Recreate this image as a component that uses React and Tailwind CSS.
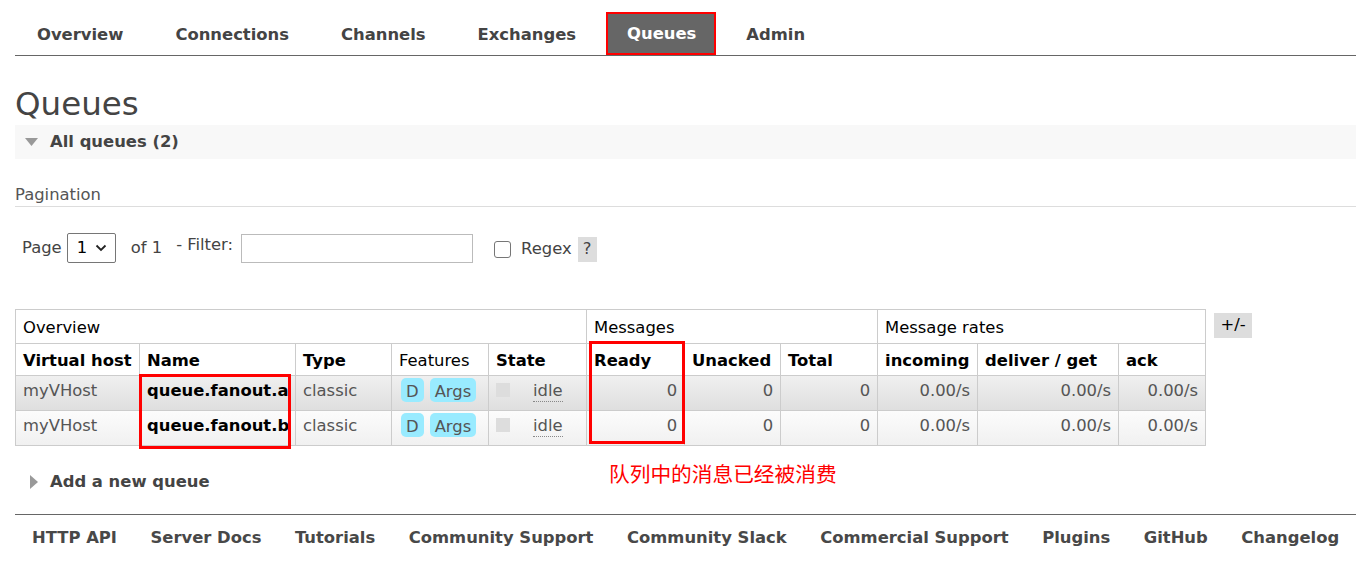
import React from "react";

const NAV = ["Overview", "Connections", "Channels", "Exchanges", "Queues", "Admin"];
const FOOTER = [
  "HTTP API",
  "Server Docs",
  "Tutorials",
  "Community Support",
  "Community Slack",
  "Commercial Support",
  "Plugins",
  "GitHub",
  "Changelog",
];

const QUEUES = [
  { vhost: "myVHost", name: "queue.fanout.a", alt: true },
  { vhost: "myVHost", name: "queue.fanout.b", alt: false },
];

const font = { fontFamily: '"DejaVu Sans", Verdana, sans-serif' };

function Badge({ children }) {
  return (
    <span className="inline-block h-[24px] rounded-[5px] bg-[#99ebff] px-[5px] pt-[3px] leading-[21px] text-[#555]">
      {children}
    </span>
  );
}

function QueueRow({ q }) {
  const bg = q.alt
    ? "bg-gradient-to-b from-[#f0f0f0] to-[#dedede]"
    : "bg-gradient-to-b from-[#fcfcfc] to-[#f0f0f0]";
  const base = "border border-[#ccc] px-[7px] align-top";
  const td = `${base} pt-[3px]`;
  return (
    <tr className={`${bg} h-[35px] text-[#555]`}>
      <td className={td}>{q.vhost}</td>
      <td className={`${td} font-bold text-black`}>{q.name}</td>
      <td className={td}>classic</td>
      <td className={`${base} pt-[2px]`}>
        <div className="flex gap-[6px] pl-[2px]">
          <Badge>D</Badge>
          <Badge>Args</Badge>
        </div>
      </td>
      <td className={`${base} pt-[5px]`}>
        <div className="flex items-start">
          <span className="mt-[2px] inline-block h-[14px] w-[14px] bg-[#ddd]" />
          <span className="ml-[23px] border-b border-dotted border-[#888] leading-[20px]">idle</span>
        </div>
      </td>
      <td className={`${td} text-right`}>0</td>
      <td className={`${td} text-right`}>0</td>
      <td className={`${td} text-right`}>0</td>
      <td className={`${td} text-right`}>0.00/s</td>
      <td className={`${td} text-right`}>0.00/s</td>
      <td className={`${td} text-right`}>0.00/s</td>
    </tr>
  );
}

export default function App() {
  const th = "border border-[#ccc] px-[7px] pt-[3px] text-left font-bold text-black";
  const group = "border border-[#ccc] px-[7px] pt-[3px] text-left font-normal";
  return (
    <div className="min-h-[561px] bg-white pl-[15px] text-[16.4px] text-[#444]" style={font}>
      {/* top navigation */}
      <ul className="flex gap-[8px] border-b border-[#666] pt-[12px]">
        {NAV.map((item) =>
          item === "Queues" ? (
            <li
              key={item}
              className="flex h-[43px] items-center border-2 border-[#f00] bg-[#666] pl-[19px] pr-[18px] pt-[2px] font-bold text-white"
            >
              {item}
            </li>
          ) : (
            <li key={item} className="flex h-[43px] items-center px-[22px] pt-[3px] font-bold text-[#444]">
              {item}
            </li>
          )
        )}
      </ul>

      <h1 className="mt-[30px] mb-[3px] text-[32.5px] leading-[36px] text-[#444]">Queues</h1>

      <div className="flex h-[34px] items-center bg-[#f8f8f8] pl-[10px]">
        <svg width="13" height="8" viewBox="0 0 13 8">
          <path d="M0 0 L13 0 L6.5 8 Z" fill="#999" />
        </svg>
        <span className="ml-[12px] font-bold text-[#444]">All queues (2)</span>
      </div>

      <div className="mt-[26px] border-b border-[#ddd] pb-[1px] leading-[20px] text-[#555]">Pagination</div>

      {/* pagination controls */}
      <div className="mt-[26px] flex h-[30px] items-center pl-[7px] text-[#444]">
        <span className="mt-[1px]">Page</span>
        <div className="ml-[5px] flex h-[30px] w-[49px] items-center rounded-[2px] border border-[#767676] pl-[9px] text-black">
          <span>1</span>
          <svg className="ml-[8px]" width="12" height="8" viewBox="0 0 12 8">
            <path d="M1.5 1.5 L6 6 L10.5 1.5" stroke="#222" strokeWidth="1.8" fill="none" />
          </svg>
        </div>
        <span className="ml-[15px] mt-[1px]">of 1</span>
        <span className="ml-[14px] -mt-[5px]">- Filter:</span>
        <div className="ml-[8px] h-[29px] w-[232px] border border-[#bbb] bg-white" />
        <span className="ml-[21px] mt-[3px] inline-block h-[17px] w-[17px] rounded-[3px] border border-[#767676]" />
        <span className="ml-[10px] mt-[3px]">Regex</span>
        <span className="ml-[6px] mt-[3px] flex h-[25px] w-[19px] items-center justify-center bg-[#ddd] text-[#444]">?</span>
      </div>

      {/* queue table */}
      <div className="relative mt-[46px] flex items-start">
        <table className="w-[1190px] table-fixed border-collapse whitespace-nowrap border border-[#ccc]">
          <colgroup>
            <col className="w-[124px]" />
            <col className="w-[156px]" />
            <col className="w-[96px]" />
            <col className="w-[97px]" />
            <col className="w-[98px]" />
            <col className="w-[98px]" />
            <col className="w-[96px]" />
            <col className="w-[97px]" />
            <col className="w-[100px]" />
            <col className="w-[141px]" />
            <col className="w-[87px]" />
          </colgroup>
          <thead>
            <tr className="h-[34px] text-black">
              <th colSpan={5} className={group}>Overview</th>
              <th colSpan={3} className={group}>Messages</th>
              <th colSpan={3} className={group}>Message rates</th>
            </tr>
            <tr className="h-[32px]">
              <th className={th}>Virtual host</th>
              <th className={th}>Name</th>
              <th className={th}>Type</th>
              <th className="border border-[#ccc] px-[7px] pt-[3px] text-left font-normal text-black">Features</th>
              <th className={th}>State</th>
              <th className={th}>Ready</th>
              <th className={th}>Unacked</th>
              <th className={th}>Total</th>
              <th className={th}>incoming</th>
              <th className={th}>deliver / get</th>
              <th className={th}>ack</th>
            </tr>
          </thead>
          <tbody>
            {QUEUES.map((q) => (
              <QueueRow key={q.name} q={q} />
            ))}
          </tbody>
        </table>

        <span className="ml-[8px] mt-[4px] flex h-[25px] w-[38px] items-center justify-center bg-[#ddd] text-black">
          +/-
        </span>

        {/* annotation overlays */}
        <div className="absolute left-[124px] top-[65px] h-[75px] w-[152px] border-[3px] border-[#f00]" />
        <div className="absolute left-[574px] top-[32px] h-[103px] w-[96px] border-[3px] border-[#f00]" />
        <div
          className="absolute left-[594px] top-[150px] text-[20.7px] leading-[28px] text-[#f00]"
          style={{ fontFamily: '"Noto Sans CJK SC", "DejaVu Sans", sans-serif' }}
        >
          队列中的消息已经被消费
        </div>
      </div>

      <div className="mt-[26px] flex h-[20px] items-center pl-[15px]">
        <svg width="8" height="14" viewBox="0 0 8 14">
          <path d="M0 0 L8 7 L0 14 Z" fill="#999" />
        </svg>
        <span className="ml-[12px] font-bold text-[#444]">Add a new queue</span>
      </div>

      {/* footer */}
      <div className="mt-[22px] flex gap-[33.5px] border-t border-[#666] pl-[17px] pt-[13px] font-bold leading-[20px] text-[#484848]">
        {FOOTER.map((f) => (
          <span key={f} className="whitespace-nowrap">{f}</span>
        ))}
      </div>
    </div>
  );
}
